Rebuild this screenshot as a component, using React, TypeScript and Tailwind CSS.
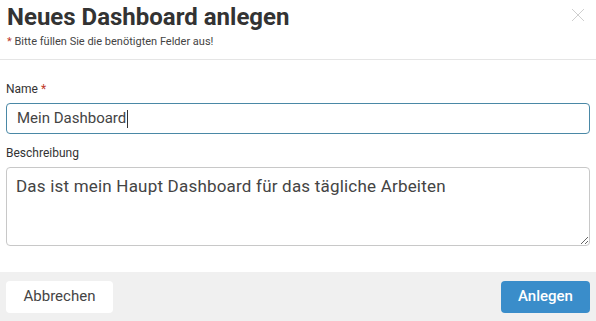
export default function App() {
  return (
    <div className="flex h-[321px] w-[596px] flex-col bg-white font-['Roboto',sans-serif] text-[#333]">
      <div className="relative border-b border-[#e5e5e5] px-[7px] pb-[9px] pt-[2px]">
        <h1 className="text-[24px] font-bold leading-[31px] text-[#333]">Neues Dashboard anlegen</h1>
        <p className="text-[11px] leading-[17px] text-[#444]">
          <span className="text-[#c0392b]">*</span> Bitte füllen Sie die benötigten Felder aus!
        </p>
        <button className="absolute right-[11px] top-[8px]">
          <svg width="14" height="14" viewBox="0 0 14 14" fill="none" stroke="#cfcfcf" strokeWidth="1">
            <path d="M1 1L13 13M13 1L1 13" />
          </svg>
        </button>
      </div>

      <div className="flex flex-1 flex-col px-[6px] pt-[22px]">
        <label className="mb-[6px] text-[12px] leading-[15px] text-[#333]">
          Name <span className="text-[#c0392b]">*</span>
        </label>
        <div className="flex h-[31px] items-center rounded-[4px] border border-[#4a88a6] px-[10px] text-[15px] text-[#444]">
          Mein Dashboard<span className="ml-px inline-block h-[18px] w-px bg-[#333]" />
        </div>

        <label className="mb-[6px] mt-[12px] text-[12px] leading-[15px] text-[#333]">Beschreibung</label>
        <textarea
          readOnly
          className="h-[79px] resize-y rounded-[4px] border border-[#c8c8c8] px-[9px] py-[7px] text-[17px] leading-[22px] tracking-[0.2px] text-[#444] outline-none"
          defaultValue="Das ist mein Haupt Dashboard für das tägliche Arbeiten"
        />
      </div>

      <div className="flex h-[49px] items-center justify-between bg-[#f0f0f0] px-[6px]">
        <button className="h-[32px] w-[107px] rounded-[4px] bg-white text-[15px] text-[#444]">Abbrechen</button>
        <button className="h-[32px] w-[89px] rounded-[4px] bg-[#3a8dca] text-[15px] font-medium text-white">Anlegen</button>
      </div>
    </div>
  );
}
